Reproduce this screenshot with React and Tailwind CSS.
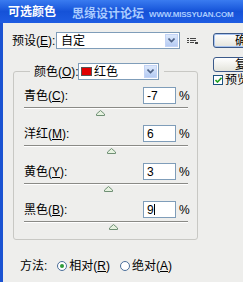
import React from 'react';

const rows = [
  { name: '青色', key: 'C', value: '-7', thumb: 'ml-[72px]' },
  { name: '洋红', key: 'M', value: '6', thumb: 'ml-[83px]' },
  { name: '黄色', key: 'Y', value: '3', thumb: 'ml-[80px]' },
  { name: '黑色', key: 'B', value: '9', thumb: 'ml-[85px]', caret: true },
];

function Chevron() {
  return (
    <svg width="7" height="5" viewBox="0 0 7 5">
      <path d="M0.5 0.5 L3.5 3.5 L6.5 0.5" fill="none" stroke="#4d6185" strokeWidth="1.6" />
    </svg>
  );
}

function DropArrow() {
  return (
    <div className="w-[13px] h-full flex items-center justify-center bg-gradient-to-b from-[#dce8fb] to-[#b5cbf3] border border-[#c3d3f5]">
      <Chevron />
    </div>
  );
}

function Thumb() {
  return (
    <svg width="9" height="6" viewBox="0 0 9 6">
      <path d="M4.5 0.5 L8.5 4 L8.5 5.5 L0.5 5.5 L0.5 4 Z" fill="#e6f2e0" stroke="#6f8f74" strokeWidth="1" />
    </svg>
  );
}

function Radio({ checked }) {
  return (
    <span className="w-[10px] h-[10px] rounded-full border border-[#4b6e9a] bg-white flex items-center justify-center">
      {checked && <span className="w-[4px] h-[4px] rounded-full bg-[#2f9b3a]" />}
    </span>
  );
}

export default function App() {
  return (
    <div
      className="w-[243px] h-[282px] overflow-hidden text-[12px] leading-none text-black"
      style={{ fontFamily: '"Liberation Sans", "Noto Sans CJK SC", sans-serif' }}
    >
      {/* title bar */}
      <div className="h-[23px] flex items-center bg-gradient-to-b from-[#3a7bf0] via-[#1552d8] to-[#1e5ce2] whitespace-nowrap">
        <span className="ml-[8px] text-white font-bold text-[12px]">可选颜色</span>
        <span className="ml-[16px] mt-[5px] text-[#a9cbff] font-bold text-[12px]">思缘设计论坛</span>
        <span className="ml-[5px] mt-[6px] text-[#a9cbff] font-bold text-[8px] tracking-[-0.2px]">WWW.MISSYUAN.COM</span>
      </div>

      <div className="h-[259px] flex border-l-[3px] border-[#1b53d2] bg-[#eeeeec]">
        {/* left column */}
        <div className="w-[205px] shrink-0">
          <div className="mt-[9px] h-[17px] flex items-center">
            <span className="ml-[9px] w-[44px] whitespace-nowrap">预设(<u>E</u>):</span>
            <div className="w-[124px] h-[17px] flex items-stretch bg-white border border-[#7f9db9] p-[1px]">
              <span className="flex-1 flex items-center pl-[3px]">自定</span>
              <DropArrow />
            </div>
            <span className="ml-[7px] flex flex-col gap-[1px]">
              <span className="flex gap-[1px]"><span className="w-[2px] h-[1px] bg-[#444]" /><span className="w-[6px] h-[1px] bg-[#444]" /></span>
              <span className="flex gap-[1px]"><span className="w-[2px] h-[1px] bg-[#444]" /><span className="w-[6px] h-[1px] bg-[#444]" /></span>
              <span className="flex gap-[1px]"><span className="w-[2px] h-[1px] bg-[#444]" /><span className="w-[4px] h-[1px] bg-[#444]" /><span className="w-[3px] h-[2px] bg-[#444]" /></span>
            </span>
          </div>

          <fieldset className="mt-[14px] ml-[10px] w-[185px] border border-[#c8c8c4] rounded-[3px]">
            <legend className="ml-[16px] px-[4px] bg-[#eeeeec]">
              <div className="h-[17px] flex items-center pr-[1px]">
                <span className="w-[44px] whitespace-nowrap">颜色(<u>O</u>):</span>
                <div className="w-[81px] h-[17px] flex items-stretch bg-white border border-[#7f9db9] p-[1px]">
                  <span className="ml-[1px] my-[2px] w-[11px] bg-[#e00000] border border-[#555]" />
                  <span className="flex-1 flex items-center pl-[2px]">红色</span>
                  <DropArrow />
                </div>
              </div>
            </legend>
            <div className="pt-[7px] pl-[10px]">
              {rows.map((r) => (
                <div key={r.key} className="mb-[9px]">
                  <div className="h-[17px] flex items-center">
                    <span className="w-[119px] whitespace-nowrap">
                      {r.name}(<u>{r.key}</u>):
                    </span>
                    <div className="w-[33px] h-[17px] flex items-center bg-white border border-[#7f9db9] pl-[3px]">
                      {r.value}
                      {r.caret && <span className="w-[1px] h-[11px] bg-black" />}
                    </div>
                    <span className="ml-[3px]">%</span>
                  </div>
                  <div className="mt-[3px] w-[164px] h-[2px] border-t border-[#8a8a86] border-b border-b-white" />
                  <div className={`mt-[1px] h-[6px] flex ${r.thumb}`}>
                    <Thumb />
                  </div>
                </div>
              ))}
            </div>
          </fieldset>

          <div className="mt-[19px] h-[13px] flex items-center whitespace-nowrap">
            <span className="ml-[17px]">方法:</span>
            <span className="ml-[10px]"><Radio checked /></span>
            <span className="ml-[2px]">相对(<u>R</u>)</span>
            <span className="ml-[10px]"><Radio /></span>
            <span className="ml-[2px]">绝对(<u>A</u>)</span>
          </div>
        </div>

        {/* right column */}
        <div className="pl-[5px] pt-[10px] flex flex-col">
          <div className="w-[68px] h-[15px] flex items-center justify-center rounded-[3px] border border-[#3c5a8a] bg-gradient-to-b from-white to-[#e4e4dc] shadow-[inset_0_0_0_1px_#a9c4f0] whitespace-nowrap">确定</div>
          <div className="mt-[9px] w-[68px] h-[15px] flex items-center justify-center rounded-[3px] border border-[#3c5a8a] bg-gradient-to-b from-white to-[#e4e4dc] whitespace-nowrap">复位</div>
          <div className="mt-[3px] h-[10px] flex items-center whitespace-nowrap">
            <span className="w-[10px] h-[10px] border border-[#1c5180] bg-white flex items-center justify-center">
              <svg width="7" height="6" viewBox="0 0 7 6">
                <path d="M0.5 3 L2.5 5 L6.5 0.8" fill="none" stroke="#21a121" strokeWidth="1.6" />
              </svg>
            </span>
            <span className="ml-[2px]">预览</span>
          </div>
        </div>
      </div>
    </div>
  );
}
